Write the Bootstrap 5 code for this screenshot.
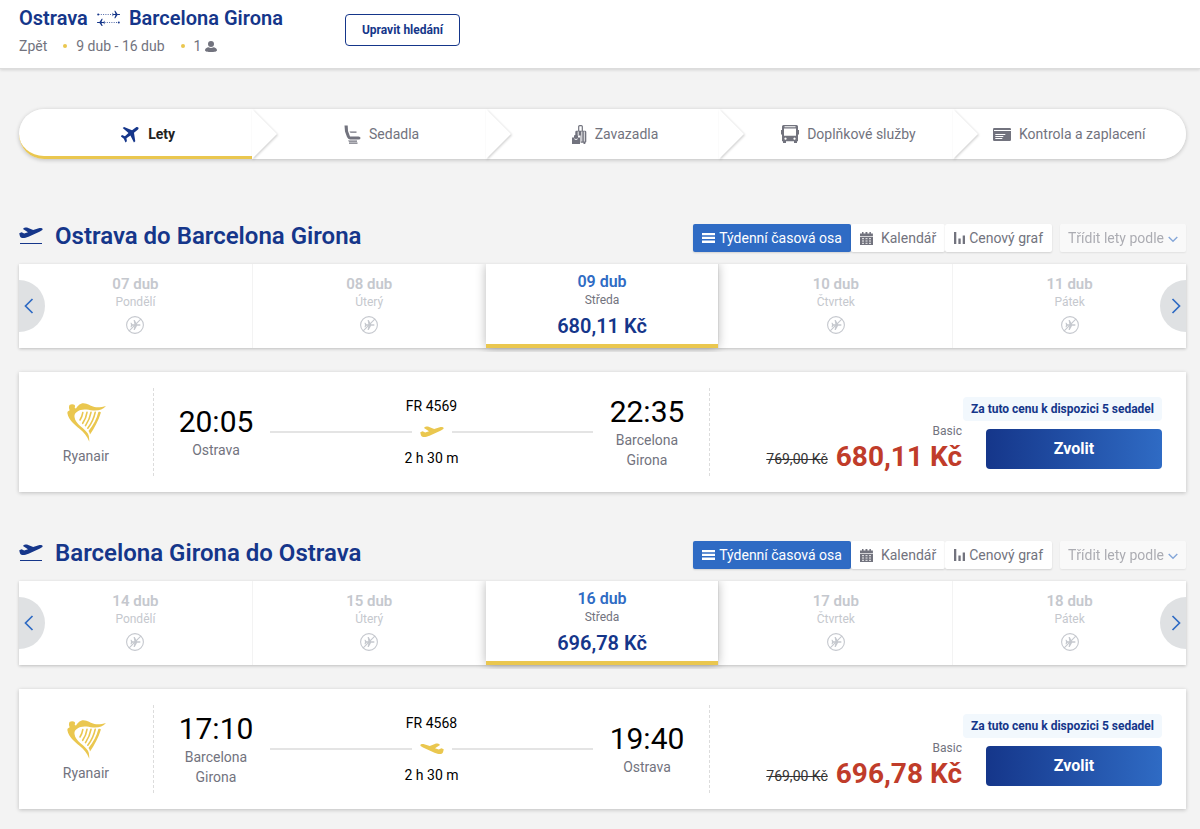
<!DOCTYPE html>
<html lang="cs">
<head>
<meta charset="utf-8">
<meta name="viewport" content="width=device-width, initial-scale=1">
<title>Ostrava – Barcelona Girona</title>
<link href="https://cdn.jsdelivr.net/npm/bootstrap@5.3.0/dist/css/bootstrap.min.css" rel="stylesheet">
<style>
:root{--navy:#15368a;--blue:#2f6bc4;--gold:#eac74f;--slate:#72737e;--faint:#c5c8ce}
body{font-family:Roboto,"Liberation Sans",sans-serif;font-size:14px;line-height:20px;color:var(--slate);background:#f3f3f3}
svg{display:block;flex:none}
a{color:inherit;text-decoration:none}
.page-pad{padding-left:19px;padding-right:14px}
.topbar{padding-top:4px;padding-bottom:12px;column-gap:62px;border-bottom:1px solid #dcdcdc;box-shadow:0 1px 3px rgba(0,0,0,.14)}
.route{font-size:20px;line-height:28px;font-weight:600;color:var(--navy);gap:8px}
.dot{width:4px;height:4px;border-radius:50%;background:var(--gold);margin:0 9px 0 16px}
.btn-edit{font-size:12px;line-height:20px;font-weight:700;color:var(--navy);border:1px solid var(--navy);border-radius:4px;padding:5px 16px}
.steps{margin-top:40px;border-radius:25px;box-shadow:0 1px 4px rgba(0,0,0,.22)}
.step{position:relative;flex:0 0 20%;height:50px;background:#fff;gap:8px;padding-left:25px}
.step:first-child{border-radius:25px 0 0 25px}
.step:last-child{border-radius:0 25px 25px 0;padding-left:0}
.step:nth-child(1){z-index:5}.step:nth-child(2){z-index:4}.step:nth-child(3){z-index:3}.step:nth-child(4){z-index:2}
.step.current{color:#222;font-weight:700;padding-top:2px;border-bottom:3px solid var(--gold)}
.step .tip{position:absolute;left:100%;top:0;filter:drop-shadow(1px 1px 1px rgba(0,0,0,.18))}
.leg{margin-top:65px}
.leg + .leg{margin-top:49px}
.leg-head{gap:12px;margin-bottom:12px}
.leg-name{gap:12px}
.leg-title{font-size:24px;line-height:24px;font-weight:600;color:var(--navy)}
.tool{font-size:14px;line-height:20px;color:var(--slate);background:#fff;border:0;border-radius:2px;padding:4px 9px;box-shadow:0 1px 2px rgba(0,0,0,.14)}
.tool.on{background:var(--blue);color:#fff}
.sorter{margin-left:8px;opacity:.55}
.sorter select{appearance:none;padding:4px 22px 4px 8px;opacity:1}
.sorter svg{position:absolute;right:8px;top:12px;pointer-events:none}
.week{position:relative;box-shadow:0 1px 3px rgba(0,0,0,.22)}
.day{height:84px;background:#fff;border:0;color:var(--faint);padding:10px 0 0}
.day + .day{border-left:1px solid #f3f3f3}
.day-date{font-size:15px;line-height:20px;font-weight:600}
.day-name{font-size:12px;line-height:16px}
.day svg{margin-top:6px}
.day.picked{position:relative;padding-top:8px;border:0;border-bottom:4px solid var(--gold);box-shadow:0 0 10px rgba(0,0,0,.28);clip-path:inset(0 -12px -4px -12px)}
.picked .day-date{font-size:16px;color:var(--blue)}
.picked .day-name{color:var(--slate)}
.day-price{font-size:20px;line-height:28px;font-weight:600;color:var(--navy);margin-top:4px}
.scroller{position:absolute;top:16px;width:26px;height:52px;border:0;background:#dfe1e3;color:var(--blue);padding:0}
.scroller.prev{left:0;border-radius:0 26px 26px 0}
.scroller.next{right:0;border-radius:26px 0 0 26px}
.flight{display:grid;grid-template-columns:135px minmax(0,1fr) 476px;min-height:120px;margin-top:24px;padding:16px 0;background:#fff;box-shadow:0 1px 4px rgba(0,0,0,.22)}
.leg .flight{margin-bottom:1px}
.carrier{border-right:1px dashed #dcdcdc}
.trip{border-right:1px dashed #dcdcdc;padding:0 24px;gap:16px}
.stop{width:76px}
.clock{font-size:30px;line-height:36px;color:#000}
.line{height:2px;background:#e4e4e4}
.offer{padding-top:8px;padding-right:24px;gap:2px}
.seats{font-size:12px;line-height:16px;font-weight:700;color:var(--navy);background:#f2f8fd;border-radius:4px;padding:4px 8px}
.fare-name{font-size:12px;line-height:16px}
.fare-old{color:#333}
.fare-now{font-size:28px;line-height:36px;font-weight:700;color:#c03c2a}
.btn-pick{width:176px;height:40px;border:0;border-radius:4px;background:linear-gradient(90deg,#15368a,#2f6bc4);color:#fff;font-size:16px;font-weight:700}
@media (max-width:1100px){
 .leg-head{flex-wrap:wrap}
 .flight{grid-template-columns:135px minmax(0,1fr)}
 .trip{border-right:0}
 .offer{grid-column:1/-1;padding-top:16px}
}
</style>
</head>
<body>
<svg width="0" height="0" class="position-absolute" aria-hidden="true">
 <symbol id="i-plane" viewBox="0 0 24 24"><path transform="rotate(52 12 12)" d="M23.500 15.500v-2.200L14 8V2c0-1.400-.9-2.500-2-2.500S10 .6 10 2v6L.5 13.300v2.200l9.500-1.800.4 6-3.400 2V24l5-1.300 5 1.300v-2.300l-3.400-2 .4-6z"/></symbol>
 <symbol id="i-rise" viewBox="0 0 24 12"><path d="M.3 6.200 2.600 5.300 5.200 6.600 9 5.200 4 1.900C4.800.9 7 .3 8.600.7L14.200 3l5.600-1.700C21.600.8 23.300 1.200 23.600 2.100c.3 1-1 1.700-2.600 2.400L9.500 9.700C6.200 11.200 3.500 11.500 2 10.600 1 9.900.5 8 .3 6.200z"/></symbol>
 <symbol id="i-nofly" viewBox="0 0 18 18"><circle cx="9" cy="9" r="8.400" fill="none" stroke="currentColor" stroke-width="1.100"/><path d="M4.500 6.800h.9l1.100 1.500h1.900L7.600 4h1.100l2.400 4.300h2.100c.9 0 1.400.3 1.400.7s-.5.700-1.400.7h-2.100L8.700 14H7.600l.8-4.300H6.500l-1.100 1.500h-.9L5 9z" fill="currentColor"/><path d="M3.200 14.800 14.800 3.200" stroke="currentColor" stroke-width="1.100"/></symbol>
 <symbol id="i-harp" viewBox="0 0 39 39"><g fill="#eac74f"><path d="M2.500 2C3.800.9 6.600.9 7.700 2c.5 1 .4 2.300-.1 3.100l1.400.5C10.800 2.800 13 .3 16.500.3c4.200 0 7 3 11 3.700 4 .7 8-.1 11.500-1.100-2.900 3.300-7.500 5-13 4.500-4.800-.5-8.500-1.600-12.500-.3-3.800 1.300-6.300 3.600-6 6.900.4 3.800 3.100 6.700 6 9.200 3.600 2.800 6 5.300 7.300 7.400 1.200 2 1.400 4 1.500 8.200-2.300-5.700-5.300-9.300-9.800-13C7.500 21.300 1.600 17 .4 10.200.2 9 .8 8 2.700 7.200c-.8-1.300-1-3.500-.2-5.200z"/><path d="M31.300 9.200c.7-.7 2.200-.6 2.600.3C31.500 17.500 27.500 25 23 31.500c-.3-1.500-.7-2.500-1.500-3.500C26.300 22 29.600 16 31.300 9.200z"/></g><g fill="none" stroke="#eac74f" stroke-width="1.600" stroke-linecap="round"><path d="M15.800 9.600c-.4 2.700-1.500 5.200-2.800 7.400"/><path d="M20 9.300c-.6 4.300-2.200 7.800-4.300 11"/><path d="M24 9.300c-.9 5-3 9.500-5.500 13.300"/><path d="M28.200 9.300c-1.300 6-4 11.500-7.400 15.900"/></g></symbol>
 <symbol id="i-left" viewBox="0 0 10 16"><path d="M8.500 1 1.500 8l7 7" fill="none" stroke="currentColor" stroke-width="1.700"/></symbol>
 <symbol id="i-right" viewBox="0 0 10 16"><path d="m1.500 1 7 7-7 7" fill="none" stroke="currentColor" stroke-width="1.700"/></symbol>
 <symbol id="i-down" viewBox="0 0 10 7"><path d="m.7 1 4.300 4.300L9.300 1" fill="none" stroke="#2f6bc4" stroke-width="1.400"/></symbol>
 <symbol id="i-list" viewBox="0 0 13 10"><path d="M0 0h13v2.300H0zM0 3.800h13v2.300H0zM0 7.600h13v2.300H0z"/></symbol>
 <symbol id="i-cal" viewBox="0 0 13 13"><path d="M0 1.500h2V0h1.500v1.500h2V0h1.900v1.500h2V0h1.500v1.500h2V4H0z"/><path d="M0 4.700h13V13H0z"/><path d="M2 6.700h2M5.500 6.700h2M9 6.700h2M2 9h2M5.500 9h2M9 9h2M2 11.300h2M5.500 11.300h2M9 11.300h2" stroke="#fff" stroke-width=".9"/></symbol>
 <symbol id="i-bars" viewBox="0 0 11 12"><path d="M0 0h2.300v12H0zM4.400 6.500h2.300V12H4.400zM8.700 3.500H11V12H8.700z"/></symbol>
 <symbol id="i-tip" viewBox="0 0 25 50"><path d="M-1 0H0l25 25L0 50h-1z" fill="#fff"/></symbol>
</svg>

<header class="topbar page-pad bg-white d-flex flex-wrap align-items-center">
 <div>
  <h1 class="route d-flex align-items-center mb-1">Ostrava
   <svg width="25" height="16" viewBox="0 0 24 16" fill="#15368a" aria-hidden="true"><path d="M2 4.500h14M8 12.500h14" stroke="#15368a" stroke-width="1" stroke-dasharray="1 1.300" fill="none" opacity=".75"/><circle cx="1.700" cy="4.500" r="1"/><circle cx="22.300" cy="12.500" r="1"/><path d="M16 2.500 17 4h2L17.800.8h1L21 4h2.200q.8.500 0 1H21l-2.200 3.200h-1L19 5h-2l-1 1.500zM8 10.500 7 12H5L6.200 8.800h-1L3 12H.8q-.8.500 0 1H3l2.200 3h1L5 13h2l1 1.500z"/></svg>
   Barcelona Girona</h1>
  <div class="d-flex align-items-center"><span>Zpět</span><i class="dot"></i><span>9 dub - 16 dub</span><i class="dot"></i><span>1</span>
   <svg class="ms-1" width="12" height="11" viewBox="0 0 12 11" fill="#72737e" role="img" aria-label="cestující"><circle cx="6" cy="3" r="3"/><path d="M0 9.300C0 7.500 1.800 6.600 3.600 6.300 5 7.200 7 7.200 8.400 6.300 10.200 6.600 12 7.500 12 9.300 12 10.700 9 11 6 11S0 10.700 0 9.300z"/></svg></div>
 </div>
 <button type="button" class="btn btn-edit">Upravit hledání</button>
</header>

<main class="page-pad pb-3">
 <nav class="steps d-flex" aria-label="Kroky rezervace">
  <a href="#lety" class="step current d-flex align-items-center justify-content-center" aria-current="step"><svg width="19" height="19" fill="#15368a"><use href="#i-plane"/></svg>Lety<svg class="tip" width="25" height="50"><use href="#i-tip"/></svg></a>
  <a href="#sedadla" class="step d-flex align-items-center justify-content-center"><svg width="17" height="19" viewBox="0 0 17 19" fill="#72737e"><path d="M.5.500h3.200L4 6l2 5.500h8.500q2 0 2 1.500t-2 1.500H6Q4 14.300 3 12L1 6.500z"/><path d="M5.500 6.500h7v1.300h-6zM4 15.600h9v1.200H5zM5 17.600h8.500v1.200H5z"/></svg>Sedadla<svg class="tip" width="25" height="50"><use href="#i-tip"/></svg></a>
  <a href="#zavazadla" class="step d-flex align-items-center justify-content-center"><svg width="15" height="19" viewBox="0 0 15 19" fill="#72737e"><path d="M6.700 6V1.600Q6.700.6 7.700.6h1.600q1 0 1 1V6" fill="none" stroke="#72737e" stroke-width="1.200"/><path d="M3.300 10.500V7q0-1.300 1.200-1.300H13q1.300 0 1.300 1.300v9.500q0 1-1 1.200V19h-1.800v-1.200H8.600v-7.300z"/><path d="M6.200 6.500v4M9.800 6.500v10M12.300 6.500v10" stroke="#fff" stroke-width=".9"/><path d="M0 12.500h2V11q0-1 1-1h2q1 0 1 1v1.500h2V19H0z"/><path d="M2.300 13.800q1.700 1.600 3.400 0" fill="none" stroke="#fff" stroke-width=".9"/></svg>Zavazadla<svg class="tip" width="25" height="50"><use href="#i-tip"/></svg></a>
  <a href="#sluzby" class="step d-flex align-items-center justify-content-center"><svg width="18" height="18" viewBox="0 0 18 18"><path fill="#72737e" fill-rule="evenodd" d="M2.500 0h13Q17 0 17 1.500V5h1v4.500h-1v6.700h-1V18h-3v-1.800H5V18H2v-1.800H1V9.500H0V5h1V1.500Q1 0 2.500 0zM3 3.600v7.200h12V3.600zM3.500 1.300v1h11v-1zM4.500 12.500a1.100 1.100 0 1 0 .01 0zM13.500 12.500a1.100 1.100 0 1 0 .01 0z"/></svg>Doplňkové služby<svg class="tip" width="25" height="50"><use href="#i-tip"/></svg></a>
  <a href="#platba" class="step d-flex align-items-center justify-content-center"><svg width="18" height="13" viewBox="0 0 18 13"><rect width="18" height="13" rx="1.200" fill="#72737e"/><path d="M1 2.500h17M2.300 6.500h10M2.300 8.500h8M2.300 10.500h7" stroke="#fff" stroke-width="1"/></svg>Kontrola a zaplacení</a>
 </nav>

 <section class="leg" id="lety">
  <div class="leg-head d-flex align-items-start">
   <div class="leg-name d-flex align-items-center me-auto"><svg width="24" height="18" viewBox="0 0 24 18" fill="#15368a" aria-hidden="true"><use href="#i-rise" width="24" height="12"/><path d="M1 16.500h22" stroke="#15368a"/></svg>
   <h2 class="leg-title mb-0">Ostrava do Barcelona Girona</h2></div>
   <div class="d-flex">
    <button type="button" class="tool on d-flex align-items-center"><svg class="me-1" width="13" height="10" fill="#fff"><use href="#i-list"/></svg>Týdenní časová osa</button>
    <button type="button" class="tool d-flex align-items-center"><svg class="me-2" width="13" height="13" fill="#72737e"><use href="#i-cal"/></svg>Kalendář</button>
    <button type="button" class="tool d-flex align-items-center"><svg class="me-1" width="11" height="12" fill="#72737e"><use href="#i-bars"/></svg>Cenový graf</button>
    <div class="sorter position-relative"><select class="tool" aria-label="Řazení letů" disabled><option>Třídit lety podle</option></select><svg width="10" height="7"><use href="#i-down"/></svg></div>
   </div>
  </div>
  <div class="week d-flex">
   <button type="button" class="day col d-flex flex-column align-items-center"><span class="day-date">07 dub</span><span class="day-name">Pondělí</span><svg width="18" height="18"><use href="#i-nofly"/></svg></button>
   <button type="button" class="day col d-flex flex-column align-items-center"><span class="day-date">08 dub</span><span class="day-name">Úterý</span><svg width="18" height="18"><use href="#i-nofly"/></svg></button>
   <button type="button" class="day picked col d-flex flex-column align-items-center"><span class="day-date">09 dub</span><span class="day-name">Středa</span><span class="day-price">680,11 Kč</span></button>
   <button type="button" class="day col d-flex flex-column align-items-center"><span class="day-date">10 dub</span><span class="day-name">Čtvrtek</span><svg width="18" height="18"><use href="#i-nofly"/></svg></button>
   <button type="button" class="day col d-flex flex-column align-items-center"><span class="day-date">11 dub</span><span class="day-name">Pátek</span><svg width="18" height="18"><use href="#i-nofly"/></svg></button>
   <button type="button" class="scroller prev d-flex align-items-center" aria-label="Předchozí dny"><svg class="ms-1" width="12" height="16"><use href="#i-left"/></svg></button>
   <button type="button" class="scroller next d-flex align-items-center justify-content-end" aria-label="Další dny"><svg class="me-1" width="12" height="16"><use href="#i-right"/></svg></button>
  </div>
  <article class="flight">
   <div class="carrier d-flex flex-column align-items-center justify-content-center pt-1"><svg width="39" height="39" class="mb-1"><use href="#i-harp"/></svg>Ryanair</div>
   <div class="trip d-flex align-items-center">
    <div class="stop text-center"><div class="clock">20:05</div><div>Ostrava</div></div>
    <div class="flex-fill text-center text-black"><div>FR 4569</div>
     <div class="d-flex align-items-center gap-2 my-2"><span class="line flex-fill"></span><svg width="24" height="16" fill="#eac74f"><use href="#i-rise"/></svg><span class="line flex-fill"></span></div>
     <div>2 h 30 m</div></div>
    <div class="stop text-center"><div class="clock">22:35</div><div>Barcelona Girona</div></div>
   </div>
   <div class="offer d-flex flex-column align-items-end justify-content-center">
    <div class="seats">Za tuto cenu k dispozici 5 sedadel</div>
    <div class="d-flex align-items-center gap-4"><div class="text-end"><div class="fare-name">Basic</div><div class="d-flex align-items-center gap-2"><s class="fare-old pt-1">769,00 Kč</s><span class="fare-now">680,11 Kč</span></div></div><button type="button" class="btn-pick">Zvolit</button></div>
   </div>
  </article>
 </section>

 <section class="leg">
  <div class="leg-head d-flex align-items-start">
   <div class="leg-name d-flex align-items-center me-auto"><svg width="24" height="18" viewBox="0 0 24 18" fill="#15368a" aria-hidden="true"><use href="#i-rise" width="24" height="12"/><path d="M1 16.500h22" stroke="#15368a"/></svg>
   <h2 class="leg-title mb-0">Barcelona Girona do Ostrava</h2></div>
   <div class="d-flex">
    <button type="button" class="tool on d-flex align-items-center"><svg class="me-1" width="13" height="10" fill="#fff"><use href="#i-list"/></svg>Týdenní časová osa</button>
    <button type="button" class="tool d-flex align-items-center"><svg class="me-2" width="13" height="13" fill="#72737e"><use href="#i-cal"/></svg>Kalendář</button>
    <button type="button" class="tool d-flex align-items-center"><svg class="me-1" width="11" height="12" fill="#72737e"><use href="#i-bars"/></svg>Cenový graf</button>
    <div class="sorter position-relative"><select class="tool" aria-label="Řazení letů" disabled><option>Třídit lety podle</option></select><svg width="10" height="7"><use href="#i-down"/></svg></div>
   </div>
  </div>
  <div class="week d-flex">
   <button type="button" class="day col d-flex flex-column align-items-center"><span class="day-date">14 dub</span><span class="day-name">Pondělí</span><svg width="18" height="18"><use href="#i-nofly"/></svg></button>
   <button type="button" class="day col d-flex flex-column align-items-center"><span class="day-date">15 dub</span><span class="day-name">Úterý</span><svg width="18" height="18"><use href="#i-nofly"/></svg></button>
   <button type="button" class="day picked col d-flex flex-column align-items-center"><span class="day-date">16 dub</span><span class="day-name">Středa</span><span class="day-price">696,78 Kč</span></button>
   <button type="button" class="day col d-flex flex-column align-items-center"><span class="day-date">17 dub</span><span class="day-name">Čtvrtek</span><svg width="18" height="18"><use href="#i-nofly"/></svg></button>
   <button type="button" class="day col d-flex flex-column align-items-center"><span class="day-date">18 dub</span><span class="day-name">Pátek</span><svg width="18" height="18"><use href="#i-nofly"/></svg></button>
   <button type="button" class="scroller prev d-flex align-items-center" aria-label="Předchozí dny"><svg class="ms-1" width="12" height="16"><use href="#i-left"/></svg></button>
   <button type="button" class="scroller next d-flex align-items-center justify-content-end" aria-label="Další dny"><svg class="me-1" width="12" height="16"><use href="#i-right"/></svg></button>
  </div>
  <article class="flight">
   <div class="carrier d-flex flex-column align-items-center justify-content-center pt-1"><svg width="39" height="39" class="mb-1"><use href="#i-harp"/></svg>Ryanair</div>
   <div class="trip d-flex align-items-center">
    <div class="stop text-center"><div class="clock">17:10</div><div>Barcelona Girona</div></div>
    <div class="flex-fill text-center text-black"><div>FR 4568</div>
     <div class="d-flex align-items-center gap-2 my-2"><span class="line flex-fill"></span><svg width="24" height="16" viewBox="0 0 24 16" fill="#eac74f"><g transform="matrix(-1 0 0 1 24 0)"><use href="#i-rise" width="24" height="16"/></g></svg><span class="line flex-fill"></span></div>
     <div>2 h 30 m</div></div>
    <div class="stop text-center"><div class="clock">19:40</div><div>Ostrava</div></div>
   </div>
   <div class="offer d-flex flex-column align-items-end justify-content-center">
    <div class="seats">Za tuto cenu k dispozici 5 sedadel</div>
    <div class="d-flex align-items-center gap-4"><div class="text-end"><div class="fare-name">Basic</div><div class="d-flex align-items-center gap-2"><s class="fare-old pt-1">769,00 Kč</s><span class="fare-now">696,78 Kč</span></div></div><button type="button" class="btn-pick">Zvolit</button></div>
   </div>
  </article>
 </section>
</main>
<script src="https://cdn.jsdelivr.net/npm/bootstrap@5.3.0/dist/js/bootstrap.bundle.min.js"></script>
</body>
</html>
